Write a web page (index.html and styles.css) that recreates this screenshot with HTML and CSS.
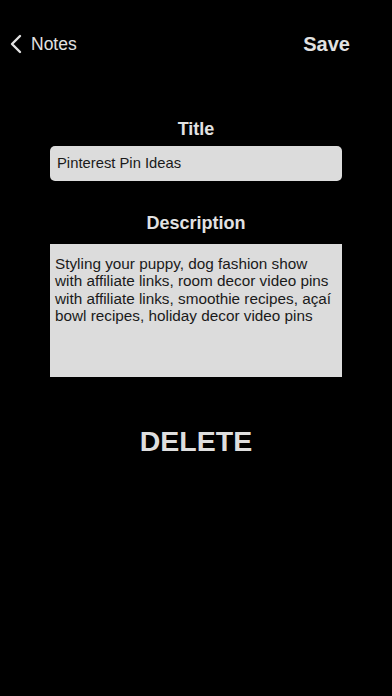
FILE: index.html
```html
<!DOCTYPE html>
<html lang="en">
<head>
    <meta charset="UTF-8">
    <title>Edit Note</title>
    <link rel="stylesheet" href="styles.css">
</head>
<body>
<div class="page">
    <div class="nav">
        <div class="back">
            <svg class="chevron" width="12" height="20" viewBox="0 0 12 20">
                <path d="M10 2 L2 10 L10 18" fill="none" stroke="#e2e2e2" stroke-width="2.4" stroke-linecap="round" stroke-linejoin="round"/>
            </svg>
            <span>Notes</span>
        </div>
        <div class="save">Save</div>
    </div>

    <div class="form">
        <div class="label">Title</div>
        <div class="field">Pinterest Pin Ideas</div>

        <div class="label label_desc">Description</div>
        <div class="area">Styling your puppy, dog fashion show with affiliate links, room decor video pins with affiliate links, smoothie recipes, açaí bowl recipes, holiday decor video pins</div>

        <div class="delete">DELETE</div>
    </div>
</div>
</body>
</html>
```

FILE: styles.css
```css
body {
    margin: 0;
    background-color: #000;
    font-family: "Liberation Sans", Arial, sans-serif;
    color: #e2e2e2;
}
.page {
    width: 392px;
    height: 696px;
    background-color: #000;
}
.nav {
    display: flex;
    justify-content: space-between;
    align-items: center;
    height: 30px;
    padding: 29px 42px 0 10px;
}
.back {
    display: flex;
    align-items: center;
    font-size: 17.5px;
}
.back span {
    margin-left: 9px;
}
.chevron {
    display: block;
}
.save {
    font-size: 20px;
    font-weight: bold;
}
.form {
    display: flex;
    flex-direction: column;
    align-items: center;
    padding-top: 60px;
}
.label {
    font-size: 18px;
    font-weight: bold;
    line-height: 20px;
}
.label_desc {
    margin-top: 32px;
}
.field {
    box-sizing: border-box;
    width: 292px;
    height: 35px;
    margin-top: 7px;
    padding: 0 7px;
    background-color: #dcdcdc;
    border-radius: 5px;
    color: #1a1a1a;
    font-size: 14.8px;
    line-height: 35px;
}
.area {
    box-sizing: border-box;
    width: 292px;
    height: 133px;
    margin-top: 11px;
    padding: 11px 10px 0 5px;
    background-color: #dcdcdc;
    color: #1a1a1a;
    font-size: 15.3px;
    line-height: 17.4px;
}
.delete {
    margin-top: 48px;
    font-size: 28.5px;
    font-weight: bold;
    color: #dedede;
}
```
